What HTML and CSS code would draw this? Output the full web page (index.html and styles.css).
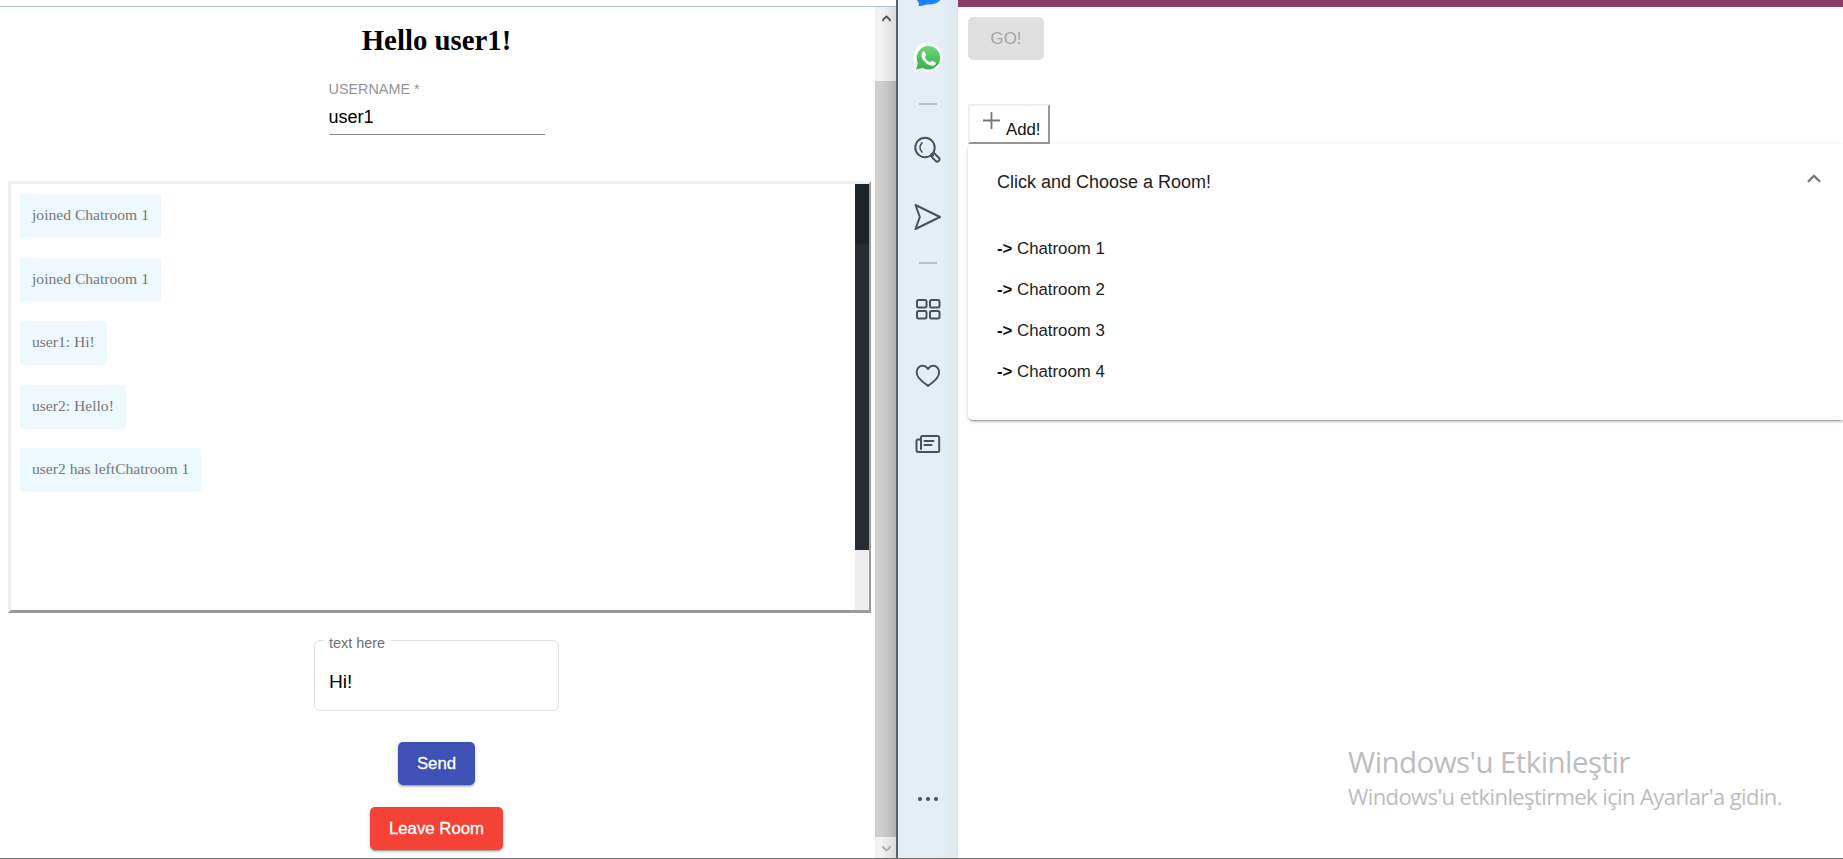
FILE: index.html
```html
<!DOCTYPE html>
<html lang="en">
<head>
<meta charset="utf-8">
<title>Chat</title>
<link rel="stylesheet" href="styles.css">
</head>
<body>
<div class="screen">
  <section class="chat-window">
    <main class="chat">
      <h1 class="greeting">Hello user1!</h1>
      <div class="username">
        <span class="username-label">USERNAME *</span>
        <span class="username-value">user1</span>
      </div>
      <div class="log">
        <div class="messages">
          <p class="message">joined Chatroom 1</p>
          <p class="message">joined Chatroom 1</p>
          <p class="message">user1: Hi!</p>
          <p class="message">user2: Hello!</p>
          <p class="message">user2 has leftChatroom 1</p>
        </div>
        <div class="log-scroll"><div class="log-thumb-top"></div><div class="log-thumb"></div></div>
      </div>
      <div class="field">
        <span class="field-label">text here</span>
        <span class="field-value">Hi!</span>
      </div>
      <div class="btn send">Send</div>
      <div class="btn leave">Leave Room</div>
    </main>
    <div class="page-scroll">
      <div class="scroll-head"><svg width="21" height="21" viewBox="0 0 21 21"><path d="M8.200 14.300V12.500L11.500 9.500l3.300 3v1.800" fill="none" stroke="#555" stroke-width="1.800"/></svg></div>
      <div class="scroll-thumb"></div>
      <div class="scroll-foot"><svg width="21" height="21" viewBox="0 0 21 21"><path d="M8.200 9v1.500l3.300 3 3.300-3V9" fill="none" stroke="#b0b0b0" stroke-width="1.900"/></svg></div>
    </div>
  </section>
  <aside class="sidebar">
    <svg width="60" height="858" viewBox="0.500 0 60 858" fill="none" stroke="#4a515b" stroke-width="2" stroke-linejoin="round" stroke-linecap="round">
      <defs><linearGradient id="wa" x1="0" y1="0" x2="0" y2="1"><stop offset="0" stop-color="#6fd67a"/><stop offset="1" stop-color="#35b24a"/></linearGradient></defs>
      <path d="M19 0h24c-3 3.500-8 4.600-13 4.400-2.500-.2-3.500 1.200-9 1.600 1-2 .5-4-2-6z" fill="#1a82ff" stroke="none"/>
      <path d="M16 72l2-7.500a14.200 14.200 0 1 1 6 5.500z" fill="#fff" stroke="#f7faf9" stroke-width="1"/>
      <path d="M18.500 69.600l1.900-6.400a11.800 11.800 0 1 1 4.600 4.800z" fill="url(#wa)" stroke="none"/>
      <path d="M25.300 51.700c.7-.7 1.600-.6 2 .2l1.300 3c.3.700-1.300 2-1.100 2.500 1 2.300 2.700 3.800 5 4.700.7.200 1.700-1.700 2.400-1.400l3 1.500c1 .6.100 2.900-1.500 3.300-6.500 1.500-15.500-8.500-11.100-13.800z" fill="#fff" stroke="none"/>
      <path d="M21.500 104h18M21.500 263h18" stroke="#b4c3d0" stroke-linecap="butt"/>
      <circle cx="27.500" cy="147.500" r="9.700"/>
      <path d="M24.500 142.800c-2.500 2.700-2.500 6.500 0 9.200" stroke-width="1.700"/>
      <path d="M34.500 154.500l2-1.500 5 5c1.700 2-1.400 4.700-3.200 3.100l-4.800-5zM34 154l1.500 1.500"/>
      <path d="M18 205l24.500 12L18 229l4.300-12z"/>
      <rect x="19.500" y="300" width="9.500" height="7.500" rx="1.500"/><rect x="32.500" y="300" width="9.500" height="7.500" rx="1.500"/>
      <rect x="19.500" y="311" width="9.500" height="7.500" rx="1.500"/><rect x="32.500" y="311" width="9.500" height="7.500" rx="1.500"/>
      <path d="M30.500 369c-2.500-4-7-4-9.500-1.500-2.500 2.600-2.300 7 0 10 2.500 3.300 6 6 9.500 8.300 3.500-2.300 7-5 9.300-8.300 2.200-3 2.500-7.400 0-10-2.500-2.500-6.800-2.500-9.300 1.500z"/>
      <path d="M23.500 449v-11.500q0-1.500 1.500-1.500h15q1.700 0 1.700 1.500v13q0 1.500-1.500 1.500H21q-2 0-2-2v-9q0-1.500 1.500-1.500h2.500M27 441h9M27 445h7"/>
      <g fill="#4a515b" stroke="none"><circle cx="22.500" cy="799" r="2.100"/><circle cx="30.500" cy="799" r="2.100"/><circle cx="38.500" cy="799" r="2.100"/></g>
    </svg>
  </aside>
  <section class="rooms-window">
    <div class="go">GO!</div>
    <div class="add"><svg class="plus" width="17" height="17" viewBox="0 0 17 17"><path d="M8.500 0v17M0 8.500h17" stroke="#777" stroke-width="1.800"/></svg><span>Add!</span></div>
    <div class="panel">
      <div class="panel-head"><span>Click and Choose a Room!</span><svg width="14" height="9" viewBox="0 0 14 9"><path d="M1 7.800L7 1.800l6 6" fill="none" stroke="#757575" stroke-width="2.300"/></svg></div>
      <div class="room"><b>-&gt;</b> Chatroom 1</div>
      <div class="room"><b>-&gt;</b> Chatroom 2</div>
      <div class="room"><b>-&gt;</b> Chatroom 3</div>
      <div class="room"><b>-&gt;</b> Chatroom 4</div>
    </div>
    <div class="activate">
      <div class="activate-title">Windows'u Etkinleştir</div>
      <div class="activate-text">Windows'u etkinleştirmek için Ayarlar'a gidin.</div>
    </div>
  </section>
</div>
</body>
</html>
```
FILE: styles.css
```css
* { box-sizing: border-box; }
body { margin: 0; background: #fff; font-family: "Liberation Sans", Arial, sans-serif; }
.screen { display: flex; width: 1843px; height: 859px; overflow: hidden; border-bottom: 1px solid #6d6d6d; }
.chat-window { display: flex; width: 896px; height: 852px; margin-top: 6px; border-top: 1px solid #b0bfcc; flex: none; }
.chat { display: flex; flex-direction: column; align-items: center; width: 875px; padding: 0 10px 0 8px; }
.greeting { margin: 15px 0 0; height: 36px; font: bold 28.8px/36px "Liberation Serif", "Times New Roman", serif; color: #000; }
.username { display: flex; flex-direction: column; width: 216px; height: 59px; margin-top: 18px; border-bottom: 1px solid #8c8c8c; }
.username-label { font-size: 14.4px; line-height: 20px; margin-top: 3px; color: #949494; }
.username-value { font-size: 18px; line-height: 22px; margin-top: 7px; color: #000; }
.log { display: flex; align-self: flex-start; width: 863px; height: 432px; margin-top: 46px; border: 3px solid; border-right-width: 2px; border-color: #eee #9a9a9a #9a9a9a #eee; flex: none; }
.messages { flex: 1; display: flex; flex-direction: column; align-items: flex-start; padding: 10px 9px; gap: 19.6px; }
.message { margin: 0; height: 44px; padding: 12px 12px 0; border-radius: 2px; background: #edf8ff; color: #777; font: 15.6px/18px "Liberation Serif", "Times New Roman", serif; }
.log-scroll { width: 14px; background: #eee; }
.log-thumb-top { height: 60px; background: #1d252b; }
.log-thumb { height: 306px; background: #262d34; }
.field { position: relative; width: 245px; height: 71px; margin-top: 27px; border: 1px solid #e0e0e0; border-radius: 6px; padding: 28px 14px 0; flex: none; }
.field-label { position: absolute; left: 9px; top: -8px; padding: 0 6px 0 5px; background: #fff; font-size: 14.4px; line-height: 20px; color: #707070; white-space: nowrap; }
.field-value { display: block; font-size: 19.2px; line-height: 26px; color: #000; }
.btn { height: 43px; line-height: 43px; border-radius: 5px; text-align: center; font-size: 16.8px; color: #fff; -webkit-text-stroke: .3px #fff; box-shadow: 0 3px 1px -2px rgba(0,0,0,.2), 0 2px 2px rgba(0,0,0,.14), 0 1px 5px rgba(0,0,0,.12); flex: none; }
.send { width: 77px; margin-top: 31px; background: #3f51b5; }
.leave { width: 133px; margin-top: 22px; background: #f44336; }
.page-scroll { display: flex; flex-direction: column; width: 21px; background: linear-gradient(90deg, #f1f1f1 30%, #dcdcdc); }
.scroll-head { height: 74px; }
.scroll-thumb { height: 756px; background: linear-gradient(90deg, #cfcfcf 20%, #c6c6c6 60%, #b0b0b0); }
.scroll-foot { height: 21px; }
.scroll-head svg, .scroll-foot svg { display: block; }
.sidebar { width: 62px; border-left: 2px solid #5a6068; background: linear-gradient(90deg, #e5edf5 70%, #dfe8f1); flex: none; }
.sidebar svg { display: block; }
.rooms-window { flex: 1; display: flex; flex-direction: column; align-items: flex-start; border-top: 7px solid #8b3c66; padding-left: 10px; }
.go { width: 76px; height: 43px; margin-top: 10px; border-radius: 5px; background: #e0e0e0; color: #a6a6a6; font-size: 16.8px; line-height: 43px; text-align: center; }
.add { display: flex; width: 82px; height: 40px; margin-top: 44px; border: 2px solid; border-color: #eee #9a9a9a #9a9a9a #eee; padding: 6px 0 0 13px; gap: 6px; font-size: 16.8px; color: #111; }
.add span { line-height: 20px; margin-top: 8px; }
.panel { width: 100%; height: 276px; border-radius: 5px 0 0 5px; background: #fff; padding: 26px 22px 0 29px; box-shadow: 0 3px 1px -2px rgba(0,0,0,.2), 0 2px 2px rgba(0,0,0,.14), 0 1px 5px rgba(0,0,0,.12); color: #212121; z-index: 1; }
.panel-head { display: flex; justify-content: space-between; font-size: 18px; line-height: 24px; margin-bottom: 34px; }
.panel-head svg { margin-top: 4px; }
.room { font-size: 16.8px; line-height: 41px; }
.room b { color: #111; }
.activate { margin: 324px 0 0 380px; font-family: "Open Sans", "Noto Sans", sans-serif; color: #bdbdbd; white-space: nowrap; }
.activate-title { font-size: 29.5px; line-height: 36px; letter-spacing: -.57px; }
.activate-text { font-size: 22px; line-height: 32px; letter-spacing: -.6px; }
```
